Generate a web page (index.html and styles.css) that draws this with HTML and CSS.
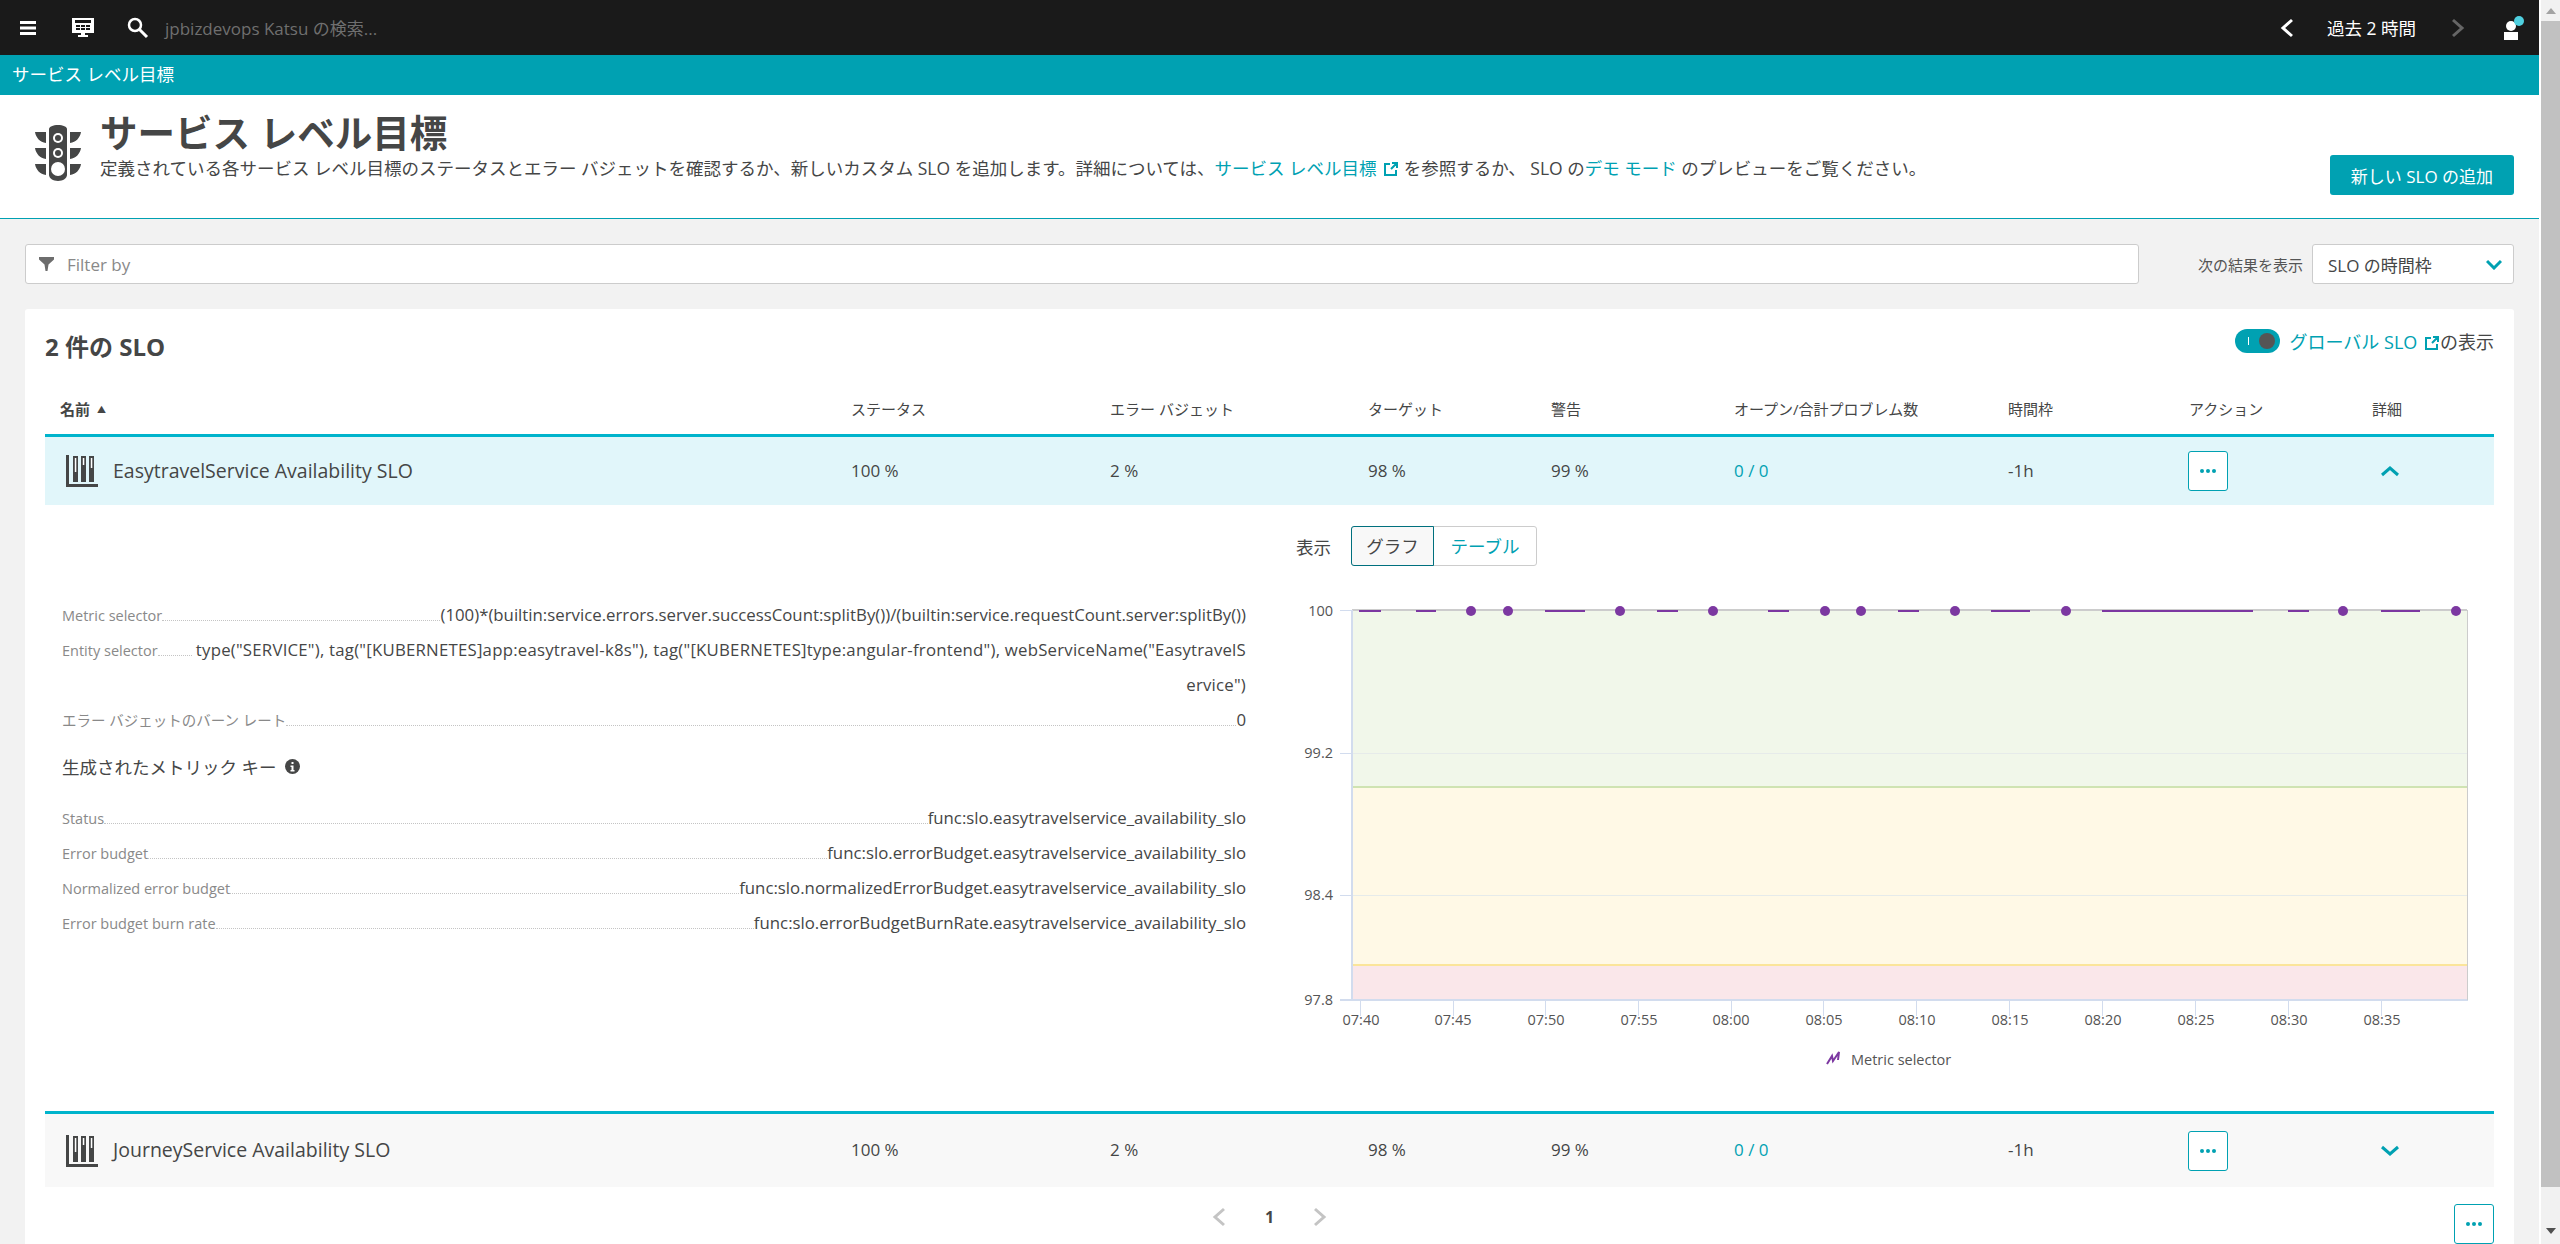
FILE: index.html
```html
<!DOCTYPE html>
<html lang="ja">
<head>
  <meta charset="UTF-8">
  <title>サービス レベル目標</title>
  <link rel="stylesheet" href="styles.css">
</head>
<body>
  <div class="page">
    <div class="main">
      <!-- Top bar -->
      <div class="topbar">
        <svg class="top-icon menu-icon" width="16" height="14" viewBox="0 0 16 14" fill="#fff"><rect width="16" height="3"/><rect y="5.500" width="16" height="3"/><rect y="11" width="16" height="3"/></svg>
        <svg class="top-icon screen-icon" width="22" height="20" viewBox="0 0 22 20"><path fill="#fff" d="M0 0h22v15h-9v2h3v2H6v-2h3v-2H0z"/><path fill="#1a1a1a" d="M3 2h16v3H3zM4 7h4v2H4zM9 7h4v2H9zM14 7h4v2h-4zM4 10h4v2H4zM9 10h4v2H9zM14 10h4v2h-4z"/></svg>
        <svg class="top-icon search-icon" width="22" height="22" viewBox="0 0 22 22" fill="none" stroke="#fff"><circle cx="8" cy="8" r="6" stroke-width="2.500"/><path d="M12.500 12.500L20 20" stroke-width="3"/></svg>
        <span class="search-text">jpbizdevops Katsu の検索...</span>
        <div class="top-right">
          <svg width="14" height="20" viewBox="0 0 14 20" fill="none" stroke="#fff" stroke-width="3"><path d="M12 2L3 10l9 8"/></svg>
          <span class="range-text">過去 2 時間</span>
          <svg width="14" height="20" viewBox="0 0 14 20" fill="none" stroke="#666" stroke-width="3"><path d="M2 2l9 8-9 8"/></svg>
          <svg class="user-icon" width="24" height="24" viewBox="0 0 24 24"><circle cx="9" cy="10" r="5" fill="#fff"/><path fill="#fff" d="M2 16h14v8H2z"/><circle cx="17" cy="5" r="5" fill="#4fd0e0"/></svg>
        </div>
      </div>

      <div class="crumb">サービス レベル目標</div>

      <!-- Page header -->
      <div class="page-header">
        <svg class="light-icon" width="46" height="56" viewBox="0 0 46 56">
          <path fill="#454646" d="M14 4c0-2 4-4 9-4s9 2 9 4v46c0 3-4 6-9 6s-9-3-9-6z"/>
          <circle cx="23" cy="13" r="5" fill="#fff"/><circle cx="23" cy="13" r="3" fill="#454646"/>
          <circle cx="23" cy="28" r="5" fill="#fff"/><circle cx="23" cy="28" r="3" fill="#454646"/>
          <circle cx="23" cy="44" r="7" fill="#fff"/>
          <path fill="#454646" d="M0 7h11v11C5 17 1 13 0 7zM46 7H35v11c6-1 10-5 11-11zM0 23h11v11C5 33 1 29 0 23zM46 23H35v11c6-1 10-5 11-11zM0 39h11v11C5 49 1 45 0 39zM46 39H35v11c6-1 10-5 11-11z"/>
        </svg>
        <div class="header-text">
          <h1>サービス レベル目標</h1>
          <p>定義されている各サービス レベル目標のステータスとエラー バジェットを確認するか、新しいカスタム SLO を追加します。詳細については、<a>サービス レベル目標 <svg class="ext-icon" width="14" height="14" viewBox="0 0 14 14" fill="none" stroke="#00a1b2" stroke-width="2"><path d="M6 2H1v11h11V8M7 7l6-6M8 1h5v5"/></svg></a> を参照するか、 SLO の<a>デモ モード</a> のプレビューをご覧ください。</p>
        </div>
        <button class="add-button">新しい SLO の追加</button>
      </div>

      <!-- Filter -->
      <div class="filter-row">
        <div class="filter-box">
          <svg width="15" height="14" viewBox="0 0 15 14" fill="#6d6d6d"><path d="M0 0h15v2.500L9.500 7.500 8.500 14h-2l-1-6.500L0 2.500z"/></svg>
          <span>Filter by</span>
        </div>
        <span class="filter-label">次の結果を表示</span>
        <div class="select-box">
          <span>SLO の時間枠</span>
          <svg width="16" height="11" viewBox="0 0 16 11" fill="none" stroke="#00a1b2" stroke-width="3"><path d="M1 2l7 7 7-7"/></svg>
        </div>
      </div>

      <!-- SLO card -->
      <div class="card">
        <div class="card-head">
          <h2>2 件の SLO</h2>
          <div class="global-toggle">
            <span class="switch"><i></i><b></b></span>
            <a>グローバル SLO <svg class="ext-icon" width="14" height="14" viewBox="0 0 14 14" fill="none" stroke="#00a1b2" stroke-width="2"><path d="M6 2H1v11h11V8M7 7l6-6M8 1h5v5"/></svg></a><span>の表示</span>
          </div>
        </div>

        <div class="table-row table-head">
          <div>名前 <span class="sort-mark">▲</span></div>
          <div>ステータス</div>
          <div>エラー バジェット</div>
          <div>ターゲット</div>
          <div>警告</div>
          <div>オープン/合計プロブレム数</div>
          <div>時間枠</div>
          <div>アクション</div>
          <div>詳細</div>
        </div>

        <div class="table-row slo-row open">
          <div class="name-cell">
            <svg width="32" height="32" viewBox="0 0 32 32"><path fill="#454646" d="M0 0h3v29h29v3H0zM7 1h5v26H7zM15 1h5v26h-5zM23 1h5v26h-5z"/><path fill="#fff" d="M8.800 3h1.500v14H8.800zM16.800 3h1.500v7h-1.500zM24.800 3h1.500v10h-1.500z"/></svg>
            <span>EasytravelService Availability SLO</span>
          </div>
          <div>100 %</div>
          <div>2 %</div>
          <div>98 %</div>
          <div>99 %</div>
          <div class="link-cell">0 / 0</div>
          <div>-1h</div>
          <div><button class="dots-button"><i></i><i></i><i></i></button></div>
          <div class="chev-cell"><svg width="20" height="12" viewBox="0 0 20 12" fill="none" stroke="#00a1b2" stroke-width="3"><path d="M2 10l8-7 8 7"/></svg></div>
        </div>

        <!-- Expanded details -->
        <div class="details">
          <div class="view-switch">
            <span>表示</span>
            <div class="segment">
              <div class="seg-item active">グラフ</div>
              <div class="seg-item">テーブル</div>
            </div>
          </div>
          <div class="details-body">
            <div class="props">
              <div class="prop"><span class="prop-key">Metric selector</span><span class="leader"></span><span class="prop-val">(100)*(builtin:service.errors.server.successCount:splitBy())/(builtin:service.requestCount.server:splitBy())</span></div>
              <div class="prop"><span class="prop-key">Entity selector</span><span class="leader"></span><span class="prop-val entity-val">type("SERVICE"), tag("[KUBERNETES]app:easytravel-k8s"), tag("[KUBERNETES]type:angular-frontend"), webServiceName("EasytravelService")</span></div>
              <div class="prop"><span class="prop-key">エラー バジェットのバーン レート</span><span class="leader"></span><span class="prop-val">0</span></div>
              <div class="keys-title">生成されたメトリック キー
                <svg width="15" height="15" viewBox="0 0 15 15"><circle cx="7.500" cy="7.500" r="7.500" fill="#454646"/><path fill="#fff" d="M6.500 3h2v2h-2zM5.500 6.500h3V11h1v1.500h-4V11h1V8h-1z"/></svg>
              </div>
              <div class="prop"><span class="prop-key">Status</span><span class="leader"></span><span class="prop-val">func:slo.easytravelservice_availability_slo</span></div>
              <div class="prop"><span class="prop-key">Error budget</span><span class="leader"></span><span class="prop-val">func:slo.errorBudget.easytravelservice_availability_slo</span></div>
              <div class="prop"><span class="prop-key">Normalized error budget</span><span class="leader"></span><span class="prop-val">func:slo.normalizedErrorBudget.easytravelservice_availability_slo</span></div>
              <div class="prop"><span class="prop-key">Error budget burn rate</span><span class="leader"></span><span class="prop-val">func:slo.errorBudgetBurnRate.easytravelservice_availability_slo</span></div>
            </div>

            <svg class="chart" width="1244" height="500" viewBox="1250 590 1244 500">
              <rect x="1352" y="610" width="1115" height="177" fill="#f1f7ea"/>
              <rect x="1352" y="787" width="1115" height="178" fill="#fff9e6"/>
              <rect x="1352" y="965" width="1115" height="35" fill="#fae7ea"/>
              <g stroke-width="1">
                <path stroke="#e6ebea" d="M1352 753.500h1115M1352 895.500h1115"/>
                <path stroke="#cfe3b2" stroke-width="2" d="M1352 787h1115"/>
                <path stroke="#fbe59a" stroke-width="2" d="M1352 965h1115"/>
                <path stroke="#cccccc" stroke-width="2" d="M1352 610h1115"/>
                <path stroke="#d2dcee" stroke-width="2" d="M1352 610v390M1340 1000h1128"/>
                <path stroke="#cccccc" d="M2467.500 610v390"/>
                <path stroke="#d2dcee" d="M1340 610.500h12M1340 753.500h12M1340 895.500h12"/>
                <path stroke="#d2dcee" d="M1360.500 1000v16M1453.500 1000v16M1545.500 1000v16M1638.500 1000v16M1731.500 1000v16M1823.500 1000v16M1916.500 1000v16M2009.500 1000v16M2102.500 1000v16M2195.500 1000v16M2288.500 1000v16M2381.500 1000v16"/>
              </g>
              <path fill="none" stroke="#7c38a1" stroke-width="2" d="M1359 611h22M1416 611h20M1545 611h40M1657 611h21M1768 611h21M1898 611h21M1991 611h39M2102 611h151M2288 611h21M2381 611h39"/>
              <g fill="#7c38a1">
                <circle cx="1471" cy="611" r="5"/><circle cx="1508" cy="611" r="5"/><circle cx="1620" cy="611" r="5"/><circle cx="1713" cy="611" r="5"/><circle cx="1825" cy="611" r="5"/><circle cx="1861" cy="611" r="5"/><circle cx="1955" cy="611" r="5"/><circle cx="2066" cy="611" r="5"/><circle cx="2343" cy="611" r="5"/><circle cx="2456" cy="611" r="5"/>
              </g>
              <g class="axis-text" text-anchor="end">
                <text x="1333" y="616">100</text><text x="1333" y="758">99.2</text><text x="1333" y="900">98.4</text><text x="1333" y="1005">97.8</text>
              </g>
              <g class="axis-text" text-anchor="middle">
                <text x="1361" y="1025">07:40</text><text x="1453" y="1025">07:45</text><text x="1546" y="1025">07:50</text><text x="1639" y="1025">07:55</text><text x="1731" y="1025">08:00</text><text x="1824" y="1025">08:05</text><text x="1917" y="1025">08:10</text><text x="2010" y="1025">08:15</text><text x="2103" y="1025">08:20</text><text x="2196" y="1025">08:25</text><text x="2289" y="1025">08:30</text><text x="2382" y="1025">08:35</text>
              </g>
              <path fill="none" stroke="#7c38a1" stroke-width="2" d="M1827 1064l5-8 1 5 6-9-1 8"/>
              <text class="axis-text" x="1851" y="1065">Metric selector</text>
            </svg>
          </div>
        </div>

        <div class="table-row slo-row closed">
          <div class="name-cell">
            <svg width="32" height="32" viewBox="0 0 32 32"><path fill="#454646" d="M0 0h3v29h29v3H0zM7 1h5v26H7zM15 1h5v26h-5zM23 1h5v26h-5z"/><path fill="#fff" d="M8.800 3h1.500v14H8.800zM16.800 3h1.500v7h-1.500zM24.800 3h1.500v10h-1.500z"/></svg>
            <span>JourneyService Availability SLO</span>
          </div>
          <div>100 %</div>
          <div>2 %</div>
          <div>98 %</div>
          <div>99 %</div>
          <div class="link-cell">0 / 0</div>
          <div>-1h</div>
          <div><button class="dots-button"><i></i><i></i><i></i></button></div>
          <div class="chev-cell"><svg width="20" height="12" viewBox="0 0 20 12" fill="none" stroke="#00a1b2" stroke-width="3"><path d="M2 2l8 7 8-7"/></svg></div>
        </div>

        <!-- Pager -->
        <div class="pager-row">
          <div class="pager">
            <svg width="14" height="20" viewBox="0 0 14 20" fill="none" stroke="#c4c4c4" stroke-width="3"><path d="M12 2L3 10l9 8"/></svg>
            <span>1</span>
            <svg width="14" height="20" viewBox="0 0 14 20" fill="none" stroke="#c4c4c4" stroke-width="3"><path d="M2 2l9 8-9 8"/></svg>
          </div>
          <button class="dots-button pager-dots"><i></i><i></i><i></i></button>
        </div>
      </div>
    </div>

    <!-- Window scrollbar -->
    <div class="scrollbar">
      <span class="arrow-up"></span>
      <span class="thumb"></span>
      <span class="arrow-down"></span>
    </div>
  </div>
</body>
</html>
```

FILE: styles.css
```css
* {
  margin: 0;
  padding: 0;
  box-sizing: border-box;
  font-family: "Open Sans", "Noto Sans CJK JP", sans-serif;
}

body {
  background-color: #fff;
  color: #454646;
  font-size: 17px;
}

.page {
  display: flex;
  height: 100vh;
  overflow: hidden;
}

.main {
  width: 2539px;
  background-color: #f2f2f2;
  flex: none;
}

a {
  color: #00a1b2;
}

/* top bar */
.topbar {
  height: 55px;
  background-color: #1a1a1a;
  display: flex;
  align-items: center;
  padding: 0 13px 0 20px;
}

.screen-icon {
  margin-left: 36px;
}

.search-icon {
  margin-left: 33px;
}

.search-text {
  margin-left: 16px;
  color: #6f6f6f;
  font-size: 17px;
}

.top-right {
  margin-left: auto;
  display: flex;
  align-items: center;
}

.range-text {
  color: #fff;
  font-size: 17.500px;
  margin: 0 35px 0 33px;
}

.user-icon {
  margin-left: 37px;
}

.crumb {
  height: 40px;
  line-height: 38px;
  background-color: #00a1b2;
  color: #fff;
  font-size: 17.500px;
  padding-left: 12px;
}

/* page header */
.page-header {
  height: 124px;
  background-color: #fff;
  border-bottom: 1px solid #00a1b2;
  display: flex;
  padding: 0 25px 0 35px;
}

.light-icon {
  margin-top: 30px;
  flex: none;
}

.header-text {
  margin-left: 19px;
  flex: 1;
}

h1 {
  font-size: 37.500px;
  line-height: 44px;
  margin-top: 16px;
}

.header-text p {
  font-size: 17.500px;
  line-height: 24px;
  margin-top: 1px;
}

.ext-icon {
  margin: 0 1px -1px 3px;
}

.add-button {
  width: 184px;
  height: 40px;
  margin-top: 60px;
  border: none;
  border-radius: 3px;
  background-color: #00a1b2;
  color: #fff;
  font-size: 17px;
}

/* filter */
.filter-row {
  display: flex;
  align-items: center;
  padding: 25px;
  height: 90px;
}

.filter-box {
  width: 2114px;
  height: 40px;
  background-color: #fff;
  border: 1px solid #ccc;
  border-radius: 3px;
  display: flex;
  align-items: center;
  gap: 13px;
  padding-left: 13px;
  color: #898989;
}

.filter-label {
  margin-left: 59px;
  font-size: 15px;
  color: #555;
}

.select-box {
  margin-left: auto;
  width: 202px;
  height: 40px;
  background-color: #fff;
  border: 1px solid #ccc;
  border-radius: 3px;
  display: flex;
  align-items: center;
  justify-content: space-between;
  padding: 0 11px 0 15px;
}

/* card */
.card {
  margin: 0 25px;
  background-color: #fff;
  border-radius: 3px;
  padding: 0 20px;
  height: 940px;
}

.card-head {
  height: 76px;
  display: flex;
  justify-content: space-between;
  align-items: flex-start;
}

h2 {
  font-size: 24px;
  line-height: 30px;
  margin-top: 23px;
}

.global-toggle {
  margin-top: 20px;
  display: flex;
  align-items: center;
  height: 24px;
  font-size: 18px;
}

.global-toggle a {
  margin-left: 10px;
}

.switch {
  width: 45px;
  height: 24px;
  border-radius: 12px;
  background-color: #00a1b2;
  position: relative;
  display: block;
}

.switch i {
  position: absolute;
  left: 13px;
  top: 8px;
  width: 1px;
  height: 8px;
  background-color: #fff;
}

.switch b {
  position: absolute;
  right: 5px;
  top: 4px;
  width: 16px;
  height: 16px;
  border-radius: 50%;
  background-color: #555;
}

/* table rows share the column grid */
.table-row {
  display: grid;
  grid-template-columns: 791px 259px 258px 183px 183px 274px 181px 183px 122px;
  align-items: center;
  padding-left: 15px;
}

.table-head {
  height: 49px;
  padding-bottom: 2px;
  font-size: 15px;
  color: #454646;
}

.table-head > div:first-child {
  font-weight: 600;
}

.sort-mark {
  font-size: 9px;
  vertical-align: 2px;
  margin-left: 3px;
}

.slo-row {
  border-top: 3px solid #00b4cc;
  font-size: 17px;
}

.slo-row > div {
  padding-bottom: 2px;
}

.slo-row.open {
  height: 71px;
  background-color: #e1f6fa;
}

.slo-row.closed {
  height: 76px;
  background-color: #f8f8f8;
}

.name-cell {
  display: flex;
  align-items: center;
  gap: 15px;
  margin-left: 6px;
  font-size: 19.500px;
}

.name-cell svg {
  margin-top: 2px;
}

.link-cell {
  color: #00a1b2;
}

.dots-button {
  width: 40px;
  height: 40px;
  background-color: #fff;
  border: 1px solid #00a1b2;
  border-radius: 3px;
  display: flex;
  align-items: center;
  justify-content: center;
  gap: 2px;
}

.slo-row .dots-button {
  margin: 2px 0 0 -1px;
}

.dots-button i {
  width: 4px;
  height: 4px;
  border-radius: 50%;
  background-color: #00a1b2;
}

.chev-cell {
  padding-left: 8px;
  line-height: 0;
}

.chev-cell svg {
  margin-top: 2px;
}

/* expanded details */
.details {
  height: 606px;
  padding-top: 21px;
}

.view-switch {
  height: 40px;
  margin-left: 1251px;
  display: flex;
  align-items: center;
  gap: 20px;
  font-size: 17.500px;
}

.segment {
  display: flex;
  height: 40px;
  line-height: 38px;
  border: 1px solid #ccc;
  border-radius: 3px;
  color: #00a1b2;
}

.seg-item {
  width: 102px;
  text-align: center;
}

.seg-item.active {
  width: 83px;
  margin: -1px 0 -1px -1px;
  height: 40px;
  border: 1px solid #00707e;
  border-radius: 3px 0 0 3px;
  background-color: #f8f8f8;
  color: #454646;
}

.details-body {
  display: flex;
  margin-top: 24px;
  gap: 4px;
}

.props {
  width: 1184px;
  margin-left: 17px;
  padding-top: 7px;
  flex: none;
}

.prop {
  display: flex;
  align-items: baseline;
  line-height: 35px;
  font-size: 16.800px;
}

.prop-key {
  flex: none;
  font-size: 14.500px;
  line-height: 1;
  color: #898989;
}

.leader {
  flex: 1 0 34px;
  border-bottom: 1px dotted #c4c4c4;
}

.prop-val {
  text-align: right;
  word-break: break-all;
  color: #454646;
}

.entity-val {
  letter-spacing: 0.220px;
}

.keys-title {
  height: 63px;
  line-height: 61px;
  font-size: 17.500px;
}

.keys-title svg {
  margin-left: 4px;
}

.chart {
  flex: none;
}

.axis-text {
  font-size: 14.500px;
  fill: #555;
}

/* pager */
.pager-row {
  display: grid;
  grid-template-columns: 1fr auto 1fr;
  padding-top: 17px;
}

.pager {
  grid-column: 2;
  display: flex;
  align-items: center;
  gap: 39px;
  height: 26px;
  font-weight: 700;
  font-size: 16px;
}

.pager-dots {
  grid-column: 3;
  justify-self: end;
}

/* fake window scrollbar */
.scrollbar {
  flex: 1;
  background-color: #f1f1f1;
  border-left: 2px solid #fff;
  display: flex;
  flex-direction: column;
  align-items: center;
}

.arrow-up {
  margin-top: 8px;
  border: 5px solid transparent;
  border-top: none;
  border-bottom: 6px solid #a3a3a3;
}

.thumb {
  width: 100%;
  height: 1166px;
  margin-top: 7px;
  background-color: #c1c1c1;
}

.arrow-down {
  margin-top: 41px;
  border: 5px solid transparent;
  border-bottom: none;
  border-top: 6px solid #505050;
}
```
